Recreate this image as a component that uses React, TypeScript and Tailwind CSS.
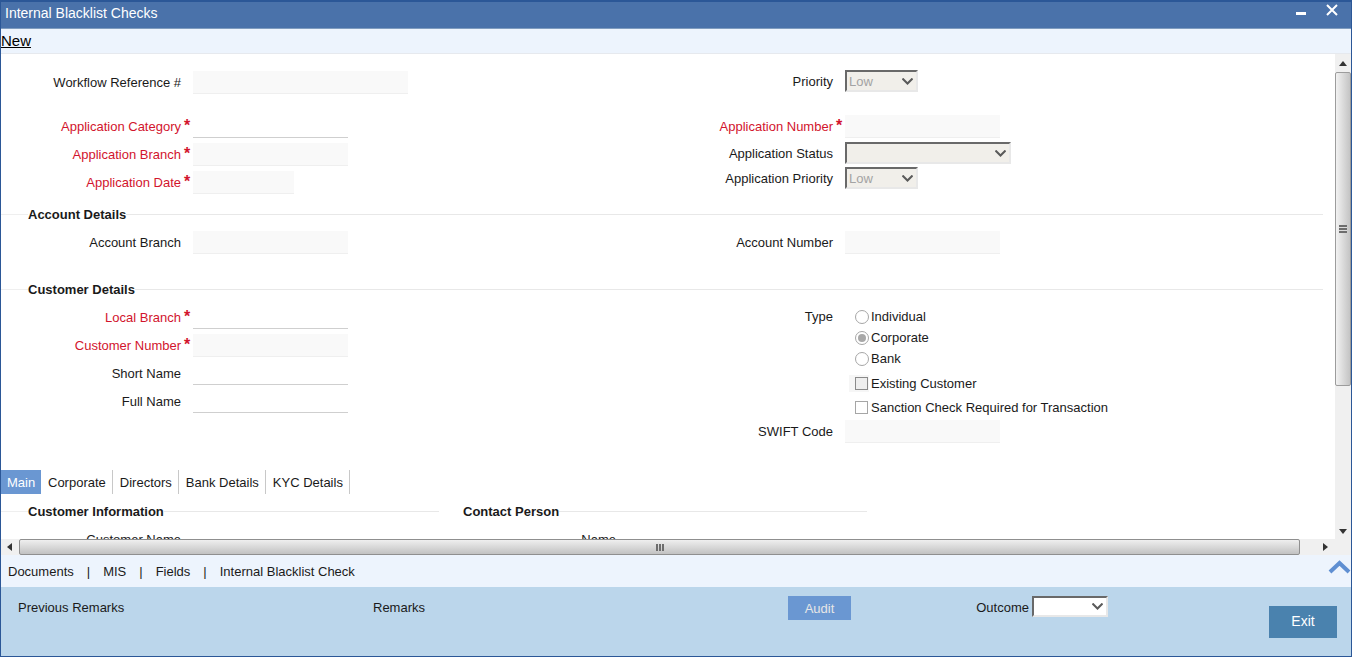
import React from 'react';

const Chevron = () => (
  <svg width="11" height="7" viewBox="0 0 11 7" fill="none" className="shrink-0">
    <path d="M0.5 0.5l5 5 5-5" stroke="#5a5a5a" strokeWidth="2" />
  </svg>
);

const Star = () => <span className="w-[12px] shrink-0 pl-[3px] text-[16px] font-bold leading-[14px] text-[#d2142d] self-start mt-[4px]">*</span>;

function Input({ w, plain }: { w: string; plain?: boolean }) {
  return <div className={`h-[23px] border-b ${plain ? 'border-[#cfcfcf] bg-white' : 'border-[#efefef] bg-[#f9f9f9]'} ${w}`} />;
}

function Select({ w, h, value, white }: { w: string; h: string; value?: string; white?: boolean }) {
  return (
    <div className={`flex items-center justify-between border-2 border-t-[#696969] border-l-[#696969] border-r-[#e8e8e8] border-b-[#e8e8e8] pl-[2px] pr-[3px] text-[#a3a3a3] ${w} ${h} ${white ? 'bg-white' : 'bg-[#f1efea]'}`}>
      <span className="pt-[2px]">{value}</span>
      <Chevron />
    </div>
  );
}

function Field({ label, req, width, children, className, low }: { label: string; req?: boolean; width: string; children?: React.ReactNode; className?: string; low?: boolean }) {
  return (
    <div className={`flex items-center ${className ?? ''}`}>
      <div className={`${width} shrink-0 text-right ${low ? 'pt-[2px]' : ''} ${req ? 'text-[#d2142d]' : 'text-[#1a1a1a]'}`}>{label}</div>
      {req ? <Star /> : <span className="w-[12px] shrink-0" />}
      {children}
    </div>
  );
}

function Section({ title }: { title: string }) {
  return (
    <div className="flex items-center h-[20px]">
      <div className="w-[27px] border-t border-[#efefef]" />
      <div className="font-bold text-[#1a1a1a] mt-[2px]">{title}</div>
      <div className="flex-1 border-t border-[#e8e8e8]" />
    </div>
  );
}

function Radio({ label, on }: { label: string; on?: boolean }) {
  return (
    <div className="flex items-center h-[21px]">
      <span className="w-[14px] h-[14px] mr-[2px] rounded-full border border-[#a6a6a6] bg-white flex items-center justify-center">
        {on && <span className="w-[8px] h-[8px] rounded-full bg-[#a8a8a8]" />}
      </span>
      <span className="pt-[1px]">{label}</span>
    </div>
  );
}

function Check({ label, shaded }: { label: string; shaded?: boolean }) {
  return (
    <div className="flex items-center h-[24px]">
      <span className={`w-[20px] h-[17px] -ml-[6px] flex items-center justify-end pr-[1px] mr-[2px] ${shaded ? 'bg-[#f6f6f6]' : ''}`}>
        <span className={`w-[13px] h-[13px] border ${shaded ? 'border-[#8a8a8a] bg-[#eeeeee]' : 'border-[#a6a6a6] bg-white'}`} />
      </span>
      <span className="pt-[1px]">{label}</span>
    </div>
  );
}

const tabs = ['Corporate', 'Directors', 'Bank Details', 'KYC Details'];

export default function App() {
  return (
    <div className="w-[1352px] h-[657px] flex flex-col overflow-hidden border-x border-[#2b5797] bg-white text-[13px] leading-[20px] text-[#1a1a1a] font-['Liberation_Sans',Arial,sans-serif]">
      <div className="h-[29px] shrink-0 flex items-center justify-between bg-[#4a72aa] border-t-2 border-t-[#2b5797] border-b border-b-[#7f9cbf] text-white pl-[4px]">
        <span className="text-[14px] -mt-[4px]">Internal Blacklist Checks</span>
        <div className="flex items-center pr-[13px] gap-[20px] -mt-[11px]">
          <div className="w-[10px] h-[3px] bg-white mt-[8px]" />
          <svg width="12" height="12" viewBox="0 0 12 12">
            <path d="M1 1l10 10M11 1L1 11" stroke="#fff" strokeWidth="2" />
          </svg>
        </div>
      </div>
      <div className="h-[25px] shrink-0 bg-[#edf4fd] border-b border-[#e6e9ee] text-[15px] leading-[24px] text-black">
        <span className="underline">New</span>
      </div>

      <div className="h-[485px] shrink-0 flex">
        <div className="flex-1 min-w-0 overflow-hidden pt-[17px]">
          <div className="flex">
            <div className="w-[652px] shrink-0 flex flex-col">
              <Field label="Workflow Reference #" width="w-[180px]"><Input w="w-[215px]" /></Field>
              <Field label="Application Category" req width="w-[180px]" className="mt-[21px]"><Input w="w-[155px]" plain /></Field>
              <Field label="Application Branch" req width="w-[180px]" className="mt-[5px]"><Input w="w-[155px]" /></Field>
              <Field label="Application Date" req width="w-[180px]" className="mt-[5px]"><Input w="w-[101px]" /></Field>
            </div>
            <div className="flex flex-col -mt-[1px]">
              <Field label="Priority" low width="w-[180px]"><Select w="w-[73px]" h="h-[22px]" value="Low" /></Field>
              <Field label="Application Number" req width="w-[180px]" className="mt-[23px]"><Input w="w-[155px]" /></Field>
              <Field label="Application Status" low width="w-[180px]" className="mt-[4px]"><Select w="w-[166px]" h="h-[22px]" /></Field>
              <Field label="Application Priority" low width="w-[180px]" className="mt-[3px]"><Select w="w-[73px]" h="h-[22px]" value="Low" /></Field>
            </div>
          </div>

          <div className="mt-[10px] pr-[12px]"><Section title="Account Details" /></div>
          <div className="flex mt-[7px]">
            <div className="w-[652px] shrink-0"><Field label="Account Branch" width="w-[180px]"><Input w="w-[155px]" /></Field></div>
            <Field label="Account Number" width="w-[180px]"><Input w="w-[155px]" /></Field>
          </div>

          <div className="mt-[25px] pr-[12px]"><Section title="Customer Details" /></div>
          <div className="flex mt-[7px]">
            <div className="w-[652px] shrink-0 flex flex-col">
              <Field label="Local Branch" req width="w-[180px]"><Input w="w-[155px]" plain /></Field>
              <Field label="Customer Number" req width="w-[180px]" className="mt-[5px]"><Input w="w-[155px]" /></Field>
              <Field label="Short Name" width="w-[180px]" className="mt-[5px]"><Input w="w-[155px]" plain /></Field>
              <Field label="Full Name" width="w-[180px]" className="mt-[5px]"><Input w="w-[155px]" plain /></Field>
            </div>
            <div className="flex flex-col">
              <div className="flex items-start">
                <div className="w-[180px] text-right leading-[22px]">Type</div>
                <div className="ml-[22px] flex flex-col">
                  <Radio label="Individual" />
                  <Radio label="Corporate" on />
                  <Radio label="Bank" />
                  <div className="mt-[2px]"><Check label="Existing Customer" shaded /></div>
                  <Check label="Sanction Check Required for Transaction" />
                </div>
              </div>
              <Field label="SWIFT Code" width="w-[180px]" className="mt-[1px]"><Input w="w-[155px]" /></Field>
            </div>
          </div>

          <div className="flex h-[24px] mt-[27px] items-stretch">
            <div className="w-[40px] bg-[#6a97d2] text-white pl-[6px] leading-[25px]">Main</div>
            {tabs.map((t) => (
              <div key={t} className="pl-[7px] pr-[6px] border-r border-[#c8c8c8] leading-[25px]">{t}</div>
            ))}
          </div>
          <div className="flex mt-[7px]">
            <div className="w-[438px] shrink-0"><Section title="Customer Information" /></div>
            <div className="w-[428px] shrink-0 flex items-center h-[20px] pl-[24px]">
              <div className="font-bold mt-[2px]">Contact Person</div>
              <div className="flex-1 border-t border-[#e8e8e8]" />
            </div>
          </div>
          <div className="flex mt-[9px]">
            <div className="w-[180px] text-right">Customer Name</div>
            <div className="w-[435px] text-right">Name</div>
          </div>
        </div>

        <div className="w-[16px] shrink-0 flex flex-col bg-[#f0f0f0]">
          <div className="h-[18px] flex items-center justify-center">
            <svg width="8" height="5" viewBox="0 0 8 5"><path d="M4 0l4 5H0z" fill="#333" /></svg>
          </div>
          <div className="h-[314px] flex items-center justify-center rounded-[2px] border border-[#9c9c9c] bg-gradient-to-r from-[#f2f2f2] to-[#c4c4c4]">
            <div className="w-[8px] h-[8px] border-y-2 border-[#6d6d6d] bg-[#dcdcdc] flex items-center"><div className="w-full h-[2px] bg-[#6d6d6d]" /></div>
          </div>
          <div className="flex-1 flex items-end justify-center pb-[5px]">
            <svg width="8" height="5" viewBox="0 0 8 5"><path d="M4 5l4-5H0z" fill="#333" /></svg>
          </div>
        </div>
      </div>

      <div className="h-[16px] shrink-0 flex items-stretch bg-[#f0f0f0]">
        <div className="w-[18px] flex items-center pl-[6px]">
          <svg width="5" height="8" viewBox="0 0 5 8"><path d="M0 4l5-4v8z" fill="#333" /></svg>
        </div>
        <div className="w-[1281px] rounded-[2px] border border-[#8f8f8f] bg-gradient-to-b from-[#efefef] to-[#c2c2c2] flex items-center justify-center">
          <div className="w-[8px] h-[7px] border-x-2 border-[#6d6d6d] flex justify-center"><div className="w-[2px] h-full bg-[#6d6d6d]" /></div>
        </div>
        <div className="w-[35px] flex items-center justify-end pr-[7px]">
          <svg width="5" height="8" viewBox="0 0 5 8"><path d="M5 4L0 0v8z" fill="#333" /></svg>
        </div>
      </div>

      <div className="h-[32px] shrink-0 flex items-center justify-between bg-[#edf4fd] pl-[7px] pt-[2px]">
        <div className="flex items-center">
          <span>Documents</span><span className="mx-[13px]">|</span>
          <span>MIS</span><span className="mx-[13px]">|</span>
          <span>Fields</span><span className="mx-[13px]">|</span>
          <span>Internal Blacklist Check</span>
        </div>
        <svg width="23" height="15" viewBox="0 0 23 15" className="-mt-[12px]">
          <path d="M2 13l9.5-9L21 13" fill="none" stroke="#5f8fd2" strokeWidth="4" />
        </svg>
      </div>

      <div className="flex-1 min-h-0 flex items-start bg-[#bbd6eb] border-b border-[#2b5797] pl-[17px]">
        <div className="w-[355px] mt-[11px]">Previous Remarks</div>
        <div className="w-[415px] mt-[11px]">Remarks</div>
        <div className="w-[63px] h-[24px] mt-[9px] bg-[#6a97d2] text-[#e6e6e6] text-[13px] leading-[26px] text-center">Audit</div>
        <div className="w-[178px] mt-[11px] text-right">Outcome</div>
        <div className="ml-[3px] mt-[9px]"><Select w="w-[76px]" h="h-[21px]" white /></div>
        <div className="ml-[161px] mt-[19px] w-[68px] h-[32px] bg-[#4a82ae] text-white text-[14px] text-center leading-[30px]">Exit</div>
      </div>
    </div>
  );
}
